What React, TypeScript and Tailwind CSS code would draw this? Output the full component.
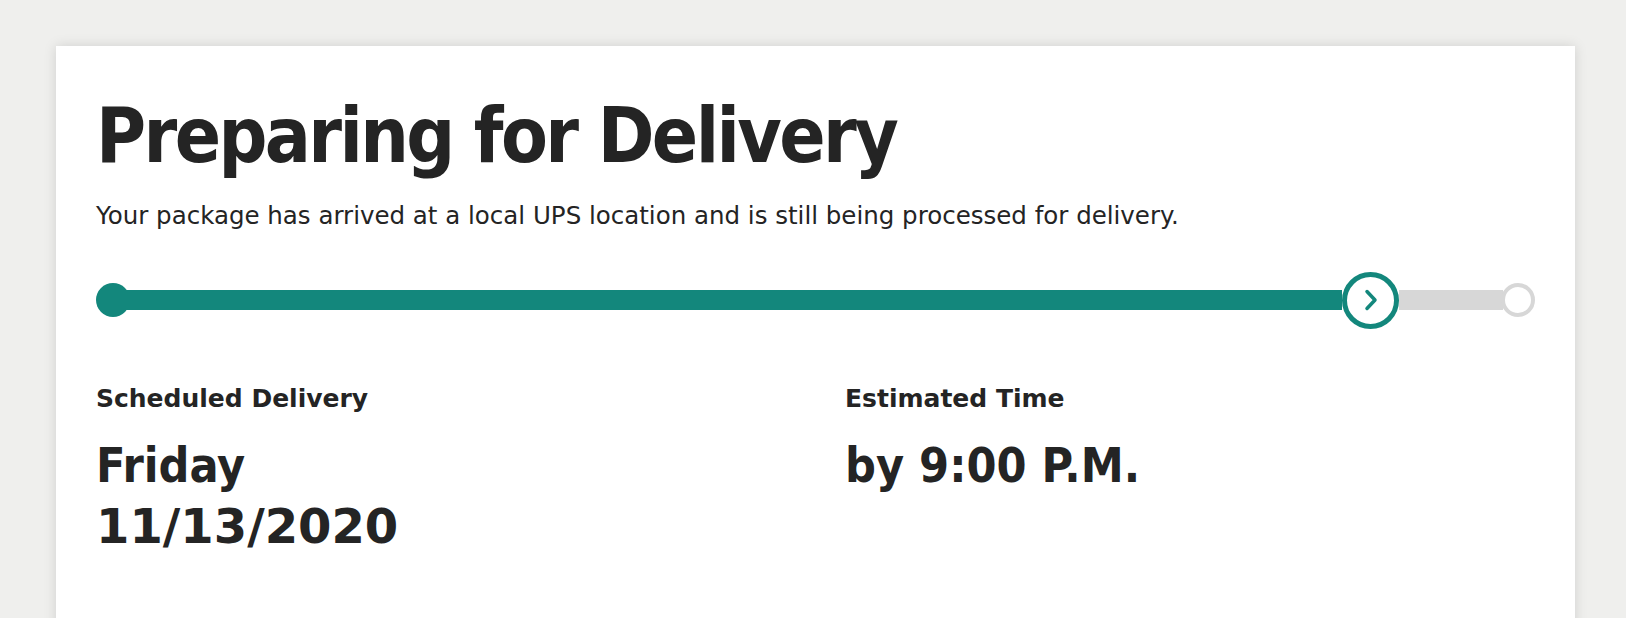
import React from 'react';

const condensed = { fontFamily: '"DejaVu Sans Condensed", "DejaVu Sans", Tahoma, sans-serif' };
const wide = { fontFamily: '"DejaVu Sans", Tahoma, sans-serif' };

function Progress() {
  return (
    <div className="flex items-center h-[60px] mt-[38px]">
      <div className="w-[34px] h-[34px] rounded-full bg-[#13877c] shrink-0" />
      <div className="flex-1 h-5 bg-[#13877c] -ml-1" />
      <div className="w-[57px] h-[57px] rounded-full border-[5px] border-[#13877c] bg-white shrink-0 flex items-center justify-center">
        <svg width="14" height="22" viewBox="0 0 14 22" fill="none">
          <path d="M3 2.5 L11 11 L3 19.5" stroke="#13877c" strokeWidth="3.5" strokeLinecap="round" strokeLinejoin="round" />
        </svg>
      </div>
      <div className="w-[104px] h-5 bg-[#d7d7d7] shrink-0" />
      <div className="w-[34px] h-[34px] rounded-full border-4 border-[#d7d7d7] bg-white shrink-0 -ml-0.5" />
    </div>
  );
}

export default function App() {
  return (
    <div className="h-[618px] overflow-hidden bg-[#efefed] pt-[46px] text-[#242424]" style={condensed}>
      <div className="ml-[56px] w-[1519px] h-[600px] bg-white shadow-[0_0_12px_rgba(0,0,0,0.13)] pt-[52px] px-10">
        <h1 className="text-[76px] leading-none font-bold tracking-[-2.6px]">Preparing for Delivery</h1>
        <p className="mt-[25px] text-[24.5px] leading-[33px]" style={wide}>
          Your package has arrived at a local UPS location and is still being processed for delivery.
        </p>
        <Progress />
        <div className="flex mt-[51px]">
          <div className="w-[749px]">
            <div className="text-[25px] leading-9 font-bold" style={wide}>Scheduled Delivery</div>
            <div className="mt-[18px] text-[48px] leading-[61px] font-bold">
              <div>Friday</div>
              <div style={wide}>11/13/2020</div>
            </div>
          </div>
          <div>
            <div className="text-[25px] leading-9 font-bold" style={wide}>Estimated Time</div>
            <div className="mt-[18px] text-[48px] leading-[61px] font-bold">by 9:00 P.M.</div>
          </div>
        </div>
      </div>
    </div>
  );
}
